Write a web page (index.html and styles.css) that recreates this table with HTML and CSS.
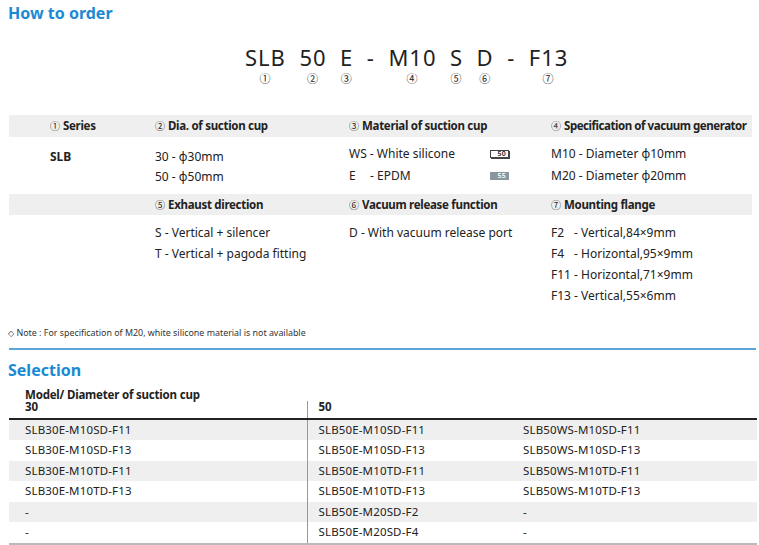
FILE: index.html
```html
<!DOCTYPE html>
<html lang="en">
<head>
<meta charset="utf-8">
<title>How to order</title>
<link rel="stylesheet" href="styles.css">
</head>
<body>
<div class="page">
  <h2 class="sec-title t1">How to order</h2>

  <div class="code">
    <div class="seg"><span class="c">SLB</span><span class="n"><span>①</span></span></div>
    <div class="seg"><span class="c">50</span><span class="n"><span>②</span></span></div>
    <div class="seg"><span class="c">E</span><span class="n"><span>③</span></span></div>
    <div class="seg"><span class="c">-</span><span class="n"></span></div>
    <div class="seg"><span class="c">M10</span><span class="n"><span>④</span></span></div>
    <div class="seg"><span class="c">S</span><span class="n"><span>⑤</span></span></div>
    <div class="seg"><span class="c">D</span><span class="n"><span>⑥</span></span></div>
    <div class="seg"><span class="c">-</span><span class="n"></span></div>
    <div class="seg"><span class="c">F13</span><span class="n"><span>⑦</span></span></div>
  </div>

  <div class="spec">
    <div class="grid band">
      <div><span class="cn">①</span>Series</div>
      <div><span class="cn">②</span>Dia. of suction cup</div>
      <div><span class="cn">③</span>Material of suction cup</div>
      <div class="tight"><span class="cn">④</span>Specification of vacuum generator</div>
    </div>
    <div class="grid body1">
      <div class="colA"><b>SLB</b></div>
      <div class="colA">
        <div>30 - ϕ30mm</div>
        <div>50 - ϕ50mm</div>
      </div>
      <div class="colB">
        <div class="mat"><span class="mlabel"><span class="code-key">WS</span> - White silicone</span><span class="tag tag-white">50</span></div>
        <div class="mat"><span class="mlabel"><span class="code-key e">E</span> - EPDM</span><span class="tag tag-grey">55</span></div>
      </div>
      <div class="colB">
        <div>M10 - Diameter ϕ10mm</div>
        <div>M20 - Diameter ϕ20mm</div>
      </div>
    </div>
    <div class="grid band">
      <div></div>
      <div><span class="cn">⑤</span>Exhaust direction</div>
      <div><span class="cn">⑥</span>Vacuum release function</div>
      <div><span class="cn">⑦</span>Mounting flange</div>
    </div>
    <div class="grid body2">
      <div></div>
      <div>
        <div>S - Vertical + silencer</div>
        <div>T - Vertical + pagoda fitting</div>
      </div>
      <div>
        <div>D - With vacuum release port</div>
      </div>
      <div>
        <div><span class="fkey">F2</span> - Vertical,84×9mm</div>
        <div><span class="fkey">F4</span> - Horizontal,95×9mm</div>
        <div><span class="fkey">F11</span> - Horizontal,71×9mm</div>
        <div><span class="fkey">F13</span> - Vertical,55×6mm</div>
      </div>
    </div>
  </div>

  <p class="note"><span class="dia">◇</span> Note : For specification of M20, white silicone material is not available</p>

  <div class="rule"></div>

  <h2 class="sec-title t2">Selection</h2>

  <div class="sel">
    <div class="sel-head">
      <div class="sel-cap">Model/ Diameter of suction cup</div>
      <div class="srow head">
        <div class="s1">30</div>
        <div class="s2">50</div>
        <div class="s3"></div>
      </div>
    </div>
    <div class="srow odd"><div class="s1">SLB30E-M10SD-F11</div><div class="s2">SLB50E-M10SD-F11</div><div class="s3">SLB50WS-M10SD-F11</div></div>
    <div class="srow"><div class="s1">SLB30E-M10SD-F13</div><div class="s2">SLB50E-M10SD-F13</div><div class="s3">SLB50WS-M10SD-F13</div></div>
    <div class="srow odd"><div class="s1">SLB30E-M10TD-F11</div><div class="s2">SLB50E-M10TD-F11</div><div class="s3">SLB50WS-M10TD-F11</div></div>
    <div class="srow"><div class="s1">SLB30E-M10TD-F13</div><div class="s2">SLB50E-M10TD-F13</div><div class="s3">SLB50WS-M10TD-F13</div></div>
    <div class="srow odd"><div class="s1">-</div><div class="s2">SLB50E-M20SD-F2</div><div class="s3">-</div></div>
    <div class="srow last"><div class="s1">-</div><div class="s2">SLB50E-M20SD-F4</div><div class="s3">-</div></div>
  </div>
</div>
</body>
</html>
```

FILE: styles.css
```css
* { box-sizing: border-box; }
html, body { margin: 0; padding: 0; background: #fff; }
body {
  font-family: "Noto Sans", "DejaVu Sans", sans-serif;
  font-size: 12px;
  color: #222;
  width: 759px;
  height: 545px;
  overflow: hidden;
}
.page { padding: 0 0 0 8px; }

.sec-title {
  margin: 0;
  color: #1b8ad3;
  font-size: 16px;
  font-weight: 700;
  line-height: 20px;
}
.t1 { padding-top: 3px; }

.code {
  display: flex;
  gap: 12.5px;
  padding-left: 236px;
  margin-top: 23px;
}
.seg { display: flex; flex-direction: column; align-items: center; }
.seg .c {
  font-size: 22px;
  line-height: 22px;
  letter-spacing: 1px;
  color: #222;
  padding-left: 1px;
}
.seg .n {
  width: 0;
  display: flex;
  justify-content: center;
  font-family: "Noto Sans CJK SC", "DejaVu Sans", sans-serif;
  font-size: 11px;
  line-height: 12px;
  height: 12px;
  margin-top: 4px;
  color: #222;
  white-space: nowrap;
}

.spec { margin: 31px 7px 0 1px; }
.grid {
  display: grid;
  grid-template-columns: 105px 194px 202px 1fr;
  padding-left: 41px;
}
.band {
  background: #efefef;
  height: 21.5px;
  align-items: center;
  font-weight: 700;
  font-size: 11.5px;
  letter-spacing: -0.3px;
  white-space: nowrap;
}
.band .tight { letter-spacing: -0.45px; }
.cn {
  font-family: "Noto Sans CJK SC", "DejaVu Sans", sans-serif;
  font-weight: 400;
  font-size: 10px;
  margin-right: 3px;
  letter-spacing: 0;
}
.body1 { padding-bottom: 7px; }
.colA { padding-top: 10px; line-height: 20px; }
.colB { padding-top: 6px; line-height: 22px; }
.body2 { padding-top: 6.5px; line-height: 21px; }

.mat { display: flex; align-items: center; }
.mlabel { width: 141px; }
.code-key { display: inline-block; }
.code-key.e { width: 18px; }
.tag {
  display: inline-block;
  width: 19px;
  height: 8px;
  font-size: 7px;
  line-height: 8px;
  text-align: right;
  padding-right: 3px;
  font-weight: 600;
  letter-spacing: 0.2px;
}
.tag-white {
  border: 1px solid #444;
  box-shadow: 1px 1px 0 #444;
  background: #fff;
  color: #222;
  line-height: 6px;
  padding-right: 2px;
}
.tag-grey { background: #8896a0; color: #fff; }
.fkey { display: inline-block; width: 20px; }

.note {
  margin: 21px 0 0 0;
  font-size: 8.9px;
  line-height: 12px;
  color: #333;
}
.dia { font-family: "DejaVu Sans", sans-serif; font-size: 8px; }

.rule {
  height: 2px;
  background: #5aa6dc;
  margin: 8px 3px 0 1px;
}
.t2 { margin-top: 10px; }

.sel { margin: 9px 2px 0 1px; }
.sel-cap {
  padding-left: 16px;
  font-weight: 700;
  font-size: 11.5px;
  letter-spacing: -0.2px;
  line-height: 12px;
}
.sel-head { border-bottom: 2px solid #222; }
.srow {
  display: grid;
  grid-template-columns: 297.5px 216.5px 1fr;
  line-height: 20.6px;
  font-size: 11.5px;
  letter-spacing: 0.15px;
}
.srow.head { line-height: 12px; font-weight: 700; letter-spacing: 0; }
.srow.head .s1, .srow.head .s2 { padding-bottom: 5px; }
.s1 { padding-left: 16px; }
.s2 { padding-left: 11px; border-left: 1px solid #999; }
.odd { background: #efefef; }
.srow.last { border-bottom: 2px solid #bbb; }
```
